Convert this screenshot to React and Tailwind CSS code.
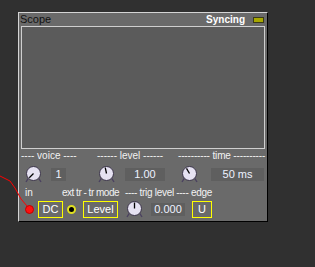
const Knob = ({ angle }) => {
  const a = (angle * Math.PI) / 180;
  const x2 = 8.5 + Math.sin(a) * 6;
  const y2 = 7.5 - Math.cos(a) * 6;
  return (
    <svg width="17" height="17" viewBox="0 0 17 17" className="block">
      <line x1="3.5" y1="12" x2="1" y2="16" stroke="#4a4060" strokeWidth="1.4" />
      <line x1="13.5" y1="12" x2="16" y2="16" stroke="#4a4060" strokeWidth="1.4" />
      <circle cx="8.5" cy="7.5" r="7" fill="#e6e2f2" stroke="#3a3348" strokeWidth="1" />
      <line x1="8.5" y1="7.5" x2={x2} y2={y2} stroke="#000" strokeWidth="1.3" />
    </svg>
  );
};

const ValueBox = ({ w, children }) => (
  <div className={`${w} h-[13px] bg-[#5f5f5f] flex items-center justify-center text-[11px] leading-none text-[#eef2ff]`}>
    {children}
  </div>
);

export default function App() {
  return (
    <div className="w-[315px] h-[267px] bg-[#303030] relative overflow-hidden pt-[12px] pl-[18px] font-['Liberation_Sans',sans-serif]">
      {/* ── panel ── */}
      <div className="w-[250px] h-[210px] bg-[#6a6a6a] border-t border-l border-[#d4d4d4] border-r border-r-black border-b border-b-black flex flex-col">
        <div className="h-[13px] flex items-center justify-between pr-[3px]">
          <span className="text-[11px] leading-none text-[#111] pl-[1px]">Scope</span>
          <div className="flex items-center gap-[8px]">
            <span className="text-[10px] font-bold leading-none text-white">Syncing</span>
            <span className="w-[11px] h-[6px] bg-[#a8a800] border border-[#3a3a1a]" />
          </div>
        </div>

        <div className="ml-[2px] w-[244px] h-[123px] border border-[#cfcfcf] bg-[#5b5b5b]" />

        {/* labels row 1 */}
        <div className="h-[13px] flex items-center text-[10px] leading-none text-[#f2f2f2] whitespace-nowrap">
          <span className="ml-[2px] w-[76px]">---- voice ----</span>
          <span className="w-[81px]">------ level ------</span>
          <span className="tracking-[-0.15px]">---------- time ----------</span>
        </div>

        {/* knob row */}
        <div className="mt-[4px] h-[17px] flex items-center">
          <div className="ml-[6px]"><Knob angle={-135} /></div>
          <div className="ml-[9px]"><ValueBox w="w-[15px]">1</ValueBox></div>
          <div className="ml-[32px]"><Knob angle={-12} /></div>
          <div className="ml-[10px]"><ValueBox w="w-[40px]">1.00</ValueBox></div>
          <div className="ml-[16px]"><Knob angle={-30} /></div>
          <div className="ml-[13px]"><ValueBox w="w-[53px]">50 ms</ValueBox></div>
        </div>

        {/* labels row 2 */}
        <div className="mt-[3px] h-[13px] flex items-center text-[10px] leading-none text-[#f2f2f2] whitespace-nowrap">
          <span className="ml-[6px] w-[37px]">in</span>
          <span className="w-[63px] tracking-[-0.5px]">ext tr - tr mode</span>
          <span className="tracking-[-0.3px]">---- trig level ---- edge</span>
        </div>

        {/* control row */}
        <div className="mt-[2px] h-[17px] flex items-center">
          <span className="ml-[6px] w-[9px] h-[9px] rounded-full bg-[#ff1010] border border-[#c00000]" />
          <div className="ml-[4px] w-[25px] h-[17px] border border-[#ffff00] flex items-center justify-center text-[11px] leading-none text-white">DC</div>
          <span className="ml-[4px] w-[9px] h-[9px] rounded-full bg-black border-2 border-[#e0e020]" />
          <div className="ml-[7px] w-[35px] h-[17px] border border-[#ffff00] flex items-center justify-center text-[11px] leading-none text-white">Level</div>
          <div className="ml-[8px]"><Knob angle={0} /></div>
          <div className="ml-[8px]"><ValueBox w="w-[34px]">0.000</ValueBox></div>
          <div className="ml-[7px] w-[20px] h-[17px] border border-[#ffff00] flex items-center justify-center text-[11px] leading-none text-white">U</div>
        </div>
      </div>

      {/* annotation arrow */}
      <svg className="absolute left-0 top-0" width="315" height="267" viewBox="0 0 315 267">
        <polyline points="0,176 10,181 15,188 21,199 27,206" fill="none" stroke="#ff0000" strokeWidth="1" />
      </svg>
    </div>
  );
}
